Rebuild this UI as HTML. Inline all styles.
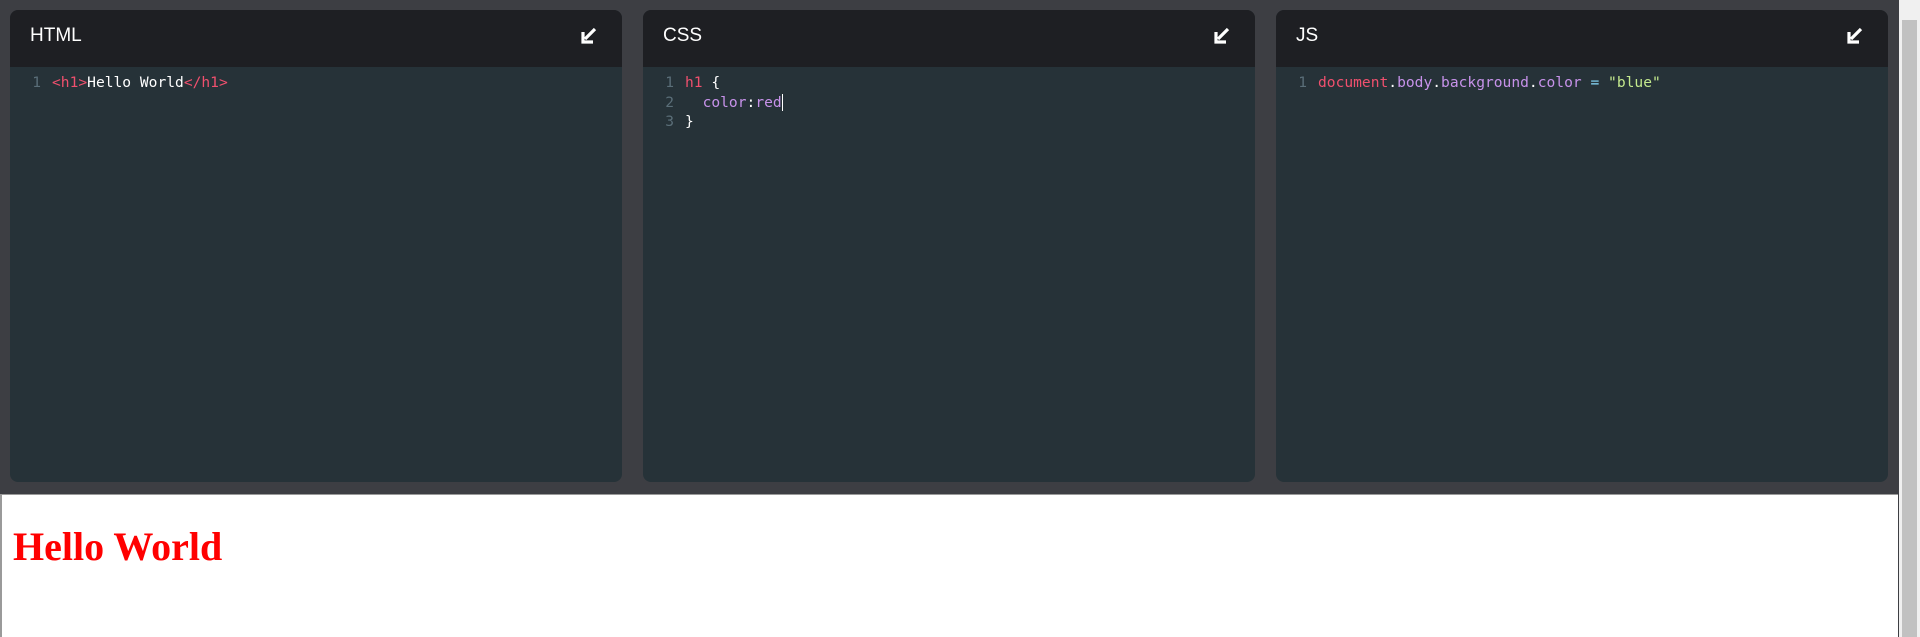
<!DOCTYPE html>
<html><head><meta charset="utf-8"><style>
html,body{margin:0;padding:0;width:1920px;height:637px;overflow:hidden;background:#3d3e43;font-family:"Liberation Sans",sans-serif}
.panel{position:absolute;top:10px;width:612px;height:472px;background:#263238;border-radius:8px;overflow:hidden}
.hd{height:57px;background:#1e1f23;color:#fff;font-size:19px;line-height:52px;padding-left:20px;position:relative}
.hd svg{position:absolute;right:24px;top:17px}
.code{font-family:"DejaVu Sans Mono","Liberation Mono",monospace;font-size:14.6px;line-height:19.6px;padding-top:6px;color:#fff}
.ln{display:inline-block;width:31px;text-align:right;color:#5a6e78;margin-right:11px}
.r{color:#f0506e}.p{color:#c792ea}.g{color:#c3e88d}.c{color:#89ddff}
.frame{position:absolute;left:0;top:494px;width:1898px;height:143px;background:#fff;border-left:2px solid #9a9a9a;border-top:1px solid #9a9a9a;box-sizing:border-box}
.frame h1{font-family:"Liberation Serif",serif;color:red;font-size:40px;margin:0;position:absolute;left:11px}
.sb{position:absolute;right:0;top:0;width:21px;height:637px;background:#f0f0f0}
.sb .th{position:absolute;left:3px;right:3px;top:20px;bottom:0;background:#c1c1c1}
</style></head><body>
<div class="panel" style="left:10px"><div class="hd">HTML<svg width="18" height="18" viewBox="0 0 18 18"><path d="M15 2L5 12M3 5v10h10" stroke="#fff" stroke-width="3.2" fill="none"/></svg></div>
<div class="code"><span class="ln">1</span><span class="r">&lt;h1&gt;</span>Hello World<span class="r">&lt;/h1&gt;</span></div></div>
<div class="panel" style="left:643px"><div class="hd">CSS<svg width="18" height="18" viewBox="0 0 18 18"><path d="M15 2L5 12M3 5v10h10" stroke="#fff" stroke-width="3.2" fill="none"/></svg></div>
<div class="code"><div><span class="ln">1</span><span class="r">h1</span> {</div><div><span class="ln">2</span><span class="p">&nbsp;&nbsp;color</span>:<span class="p">red</span><span style="border-left:1px solid #fff"></span></div><div><span class="ln">3</span>}</div></div></div>
<div class="panel" style="left:1276px"><div class="hd">JS<svg width="18" height="18" viewBox="0 0 18 18"><path d="M15 2L5 12M3 5v10h10" stroke="#fff" stroke-width="3.2" fill="none"/></svg></div>
<div class="code"><span class="ln">1</span><span class="r">document</span>.<span class="p">body</span>.<span class="p">background</span>.<span class="p">color</span> <span class="c">=</span> <span class="g">"blue"</span></div></div>
<div class="frame"><h1 style="top:28px">Hello World</h1></div>
<div class="sb"><div class="th"></div></div>
</body></html>
